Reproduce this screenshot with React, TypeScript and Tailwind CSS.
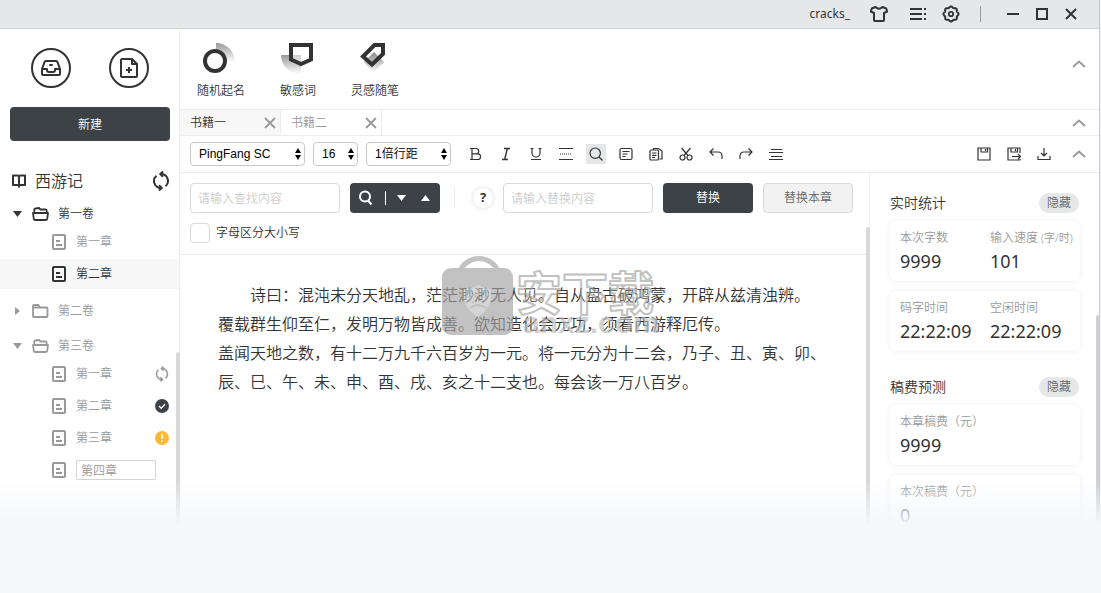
import React, { useState } from 'react';

type IconProps = { className?: string };

const strokeProps = { fill: 'none', stroke: 'currentColor' };

/* ---------- icons ---------- */

function InboxIcon() {
  return (
    <svg width="20" height="16" viewBox="0 0 20 16" {...strokeProps} strokeWidth="2" strokeLinejoin="round">
      <path d="M1 9 3.5 2.2Q3.9 1 5 1h10q1.100 0 1.500 1.200L19 9v5q0 1-1 1H2q-1 0-1-1z" />
      <path d="M1 9h5v1q0 2 2 2h4q2 0 2-2V9h5M8.300 5h3.400" />
    </svg>
  );
}

function FilePlusIcon() {
  return (
    <svg width="18" height="20" viewBox="0 0 18 20" {...strokeProps} strokeWidth="2" strokeLinejoin="round">
      <path d="M2 1h10l5 5v12q0 1-1 1H2q-1 0-1-1V2q0-1 1-1z" />
      <path d="M12 1v5h5M6 12h6M9 9v6" />
    </svg>
  );
}

function BookIcon() {
  return (
    <svg width="14" height="14" viewBox="0 0 14 14" {...strokeProps} strokeWidth="2" strokeLinejoin="round">
      <path d="M1 1.500h4.500Q7 1.500 7 3v8H1zM13 1.500H8.500Q7 1.500 7 3v8h6zM7 11v2.500" />
    </svg>
  );
}

function SyncIcon({ className }: IconProps) {
  return (
    <svg className={className} viewBox="0 0 18 20" {...strokeProps} strokeWidth="2">
      <path d="M8.500 3a7 7 0 0 1 5 12.300M9.500 17a7 7 0 0 1-5-12.300" />
      <path d="M11 .5 8.300 3 11 5.700M7 14.300 9.700 17 7 19.500" />
    </svg>
  );
}

function OpenFolderIcon() {
  return (
    <svg width="17" height="14" viewBox="0 0 17 14" {...strokeProps} strokeWidth="1.800" strokeLinejoin="round">
      <path d="M2.300 6V2.500Q2.300 1.500 3.500 1.500L7 1l1.500 1.500h5q1.200 0 1.200 1.200V6" />
      <path d="M1 6h15l-.8 6q-.1 1-1.200 1H3q-1 0-1.200-1z" />
    </svg>
  );
}

function FolderIcon() {
  return (
    <svg width="17" height="14" viewBox="0 0 17 14" {...strokeProps} strokeWidth="1.800" strokeLinejoin="round">
      <path d="M1 12V2q0-1 1-1h4.500L8 3.500h6.500q1 0 1 1V12q0 1-1 1H2q-1 0-1-1zM1 3.500h7" />
    </svg>
  );
}

function ChapterIcon() {
  return (
    <svg width="14" height="16" viewBox="0 0 14 16" {...strokeProps} strokeWidth="2">
      <rect x="1" y="1" width="12" height="14" rx="1" />
      <path d="M4 7h4M4 11h6" strokeWidth="2" />
    </svg>
  );
}

function DoneIcon() {
  return (
    <svg width="14" height="14" viewBox="0 0 14 14">
      <circle cx="7" cy="7" r="7" fill="#3d4246" />
      <path d="M4 7l2.200 2.200L10 5.200" fill="none" stroke="#fff" strokeWidth="1.300" />
    </svg>
  );
}

function WarnIcon() {
  return (
    <svg width="14" height="14" viewBox="0 0 14 14">
      <circle cx="7" cy="7" r="7" fill="#fdb933" />
      <path d="M7 3v5M7 9.500V11" stroke="#fff" strokeWidth="1.600" />
    </svg>
  );
}

function Caret({ dir, className }: { dir: 'up' | 'down' | 'right'; className?: string }) {
  const points = { up: '0,6 9,6 4.500,0', down: '0,0 9,0 4.500,6', right: '2,-1 2,7 7,3' }[dir];
  return (
    <svg width="9" height="6" viewBox="0 0 9 6" overflow="visible" className={className}>
      <polygon points={points} fill="currentColor" />
    </svg>
  );
}

function ChevronUp() {
  return (
    <svg width="14" height="8" viewBox="0 0 14 8" {...strokeProps} strokeWidth="1.800">
      <path d="M1 7l6-5.500L13 7" />
    </svg>
  );
}

function CloseIcon({ size, width }: { size: number; width: number }) {
  return (
    <svg width={size} height={size} viewBox="0 0 12 12" {...strokeProps} strokeWidth={width}>
      <path d="M1 1l10 10M11 1 1 11" />
    </svg>
  );
}

function ShirtIcon() {
  return (
    <svg width="18" height="16" viewBox="0 0 18 16" {...strokeProps} strokeWidth="2" strokeLinejoin="round">
      <path d="M5.500 1Q9 4.500 12.500 1l3.700 1.500 1 3L14 7v7q0 1-1 1H5q-1 0-1-1V7L.8 5.500l1-3z" />
    </svg>
  );
}

function MenuDotsIcon() {
  return (
    <svg width="20" height="14" viewBox="0 0 20 14" {...strokeProps} strokeWidth="2">
      <path d="M2 2h12M2 7h12M2 12h12M16 2h2M16 7h2M16 12h2" />
    </svg>
  );
}

function GearIcon() {
  // eight soft lobes around the hub
  const pts = Array.from({ length: 96 }, (_, i) => {
    const a = (i / 96) * Math.PI * 2;
    const r = 7 + 0.6 * Math.cos(a * 8);
    return `${(9 + r * Math.sin(a)).toFixed(2)},${(9 - r * Math.cos(a)).toFixed(2)}`;
  });
  return (
    <svg width="18" height="18" viewBox="0 0 18 18" {...strokeProps} strokeWidth="2">
      <polygon points={pts.join(' ')} />
      <circle cx="9" cy="9" r="2.200" strokeWidth="1.800" />
    </svg>
  );
}

function RandomNameIcon() {
  return (
    <svg width="38" height="32" viewBox="0 0 38 32" className="-mx-px">
      <defs>
        <linearGradient id="gName" x1="0" y1="0" x2="0" y2="1">
          <stop offset="0" stopColor="#999" />
          <stop offset="1" stopColor="#fff" />
        </linearGradient>
      </defs>
      <path d="M14 1a19 19 0 0 1 19 19H14z" fill="url(#gName)" />
      <circle cx="13" cy="19" r="10" fill="#fff" stroke="#333" strokeWidth="4" />
    </svg>
  );
}

function SensitiveIcon() {
  return (
    <svg width="38" height="32" viewBox="0 0 38 32" className="-mx-px">
      <defs>
        <linearGradient id="gWord" x1="0" y1="0" x2="0" y2="1">
          <stop offset="0" stopColor="#999" />
          <stop offset="1" stopColor="#fff" />
        </linearGradient>
      </defs>
      <path d="M2 13h20v19A19 19 0 0 1 2 13z" fill="url(#gWord)" />
      <path d="M12 3h20v14.500L22 22l-10-4.500z" fill="#fff" fillOpacity=".55" stroke="#333" strokeWidth="4" />
    </svg>
  );
}

function EssayIcon() {
  return (
    <svg width="38" height="32" viewBox="0 0 38 32" className="-mx-px">
      <defs>
        <linearGradient id="gPen" x1="0" y1="0" x2="0" y2="1">
          <stop offset="0" stopColor="#888" />
          <stop offset="1" stopColor="#fff" />
        </linearGradient>
      </defs>
      <path d="M18 10 28 20 17 31 8 20z" fill="url(#gPen)" />
      <path d="M18.500 3H27v9L16 22.500 7 14.500z" fill="none" stroke="#333" strokeWidth="4" />
    </svg>
  );
}

const toolIcons: { label: string; art: React.ReactNode }[] = [
  { label: '加粗', art: <path d="M3 1.500v11M1 1.500h6.500a2.700 2.700 0 0 1 0 5.300H3M7.500 6.800h1.200a2.800 2.800 0 0 1 0 5.700H1" /> },
  { label: '斜体', art: <path d="M5 1.500h6M3 12.500h6M8.300 1.500l-2.600 11" strokeWidth="1.400" /> },
  { label: '下划线', art: <path d="M1.500 1.500h3M9.500 1.500h3M3 1.500V6a4 4 0 0 0 8 0V1.500M2 12.500h10" /> },
  { label: '分隔线', art: <><path d="M0 1.500h14M0 12.500h14" /><path d="M1 7h12" strokeDasharray="1 1" /></> },
  { label: '查找', art: <><circle cx="6.200" cy="6.200" r="5.200" /><path d="M10 10l3.500 3.500" /></> },
  { label: '排版', art: <><rect x="1" y="1.500" width="12" height="11" rx="1.500" /><path d="M3.500 4.500h7M3.500 7h5M3.500 9.500h3" /></> },
  { label: '复制', art: <><path d="M4.500 3V1.500h5L13 4v8h-2.500" /><rect x="1" y="3" width="8.500" height="10" rx="1" /><path d="M3 6h4.500M3 8.300h4.500M3 10.500h3" /></> },
  { label: '剪切', art: <><circle cx="3.500" cy="10.500" r="2.500" /><circle cx="10.500" cy="10.500" r="2.500" /><path d="M2.500 1l6.500 7.500M11.500 1 5 8.500" /></> },
  { label: '撤销', art: <path d="M4.500 1.500 1 5l3.500 3.500M1 5h8q4 0 4 4v3" /> },
  { label: '重做', art: <path d="M9.500 1.500 13 5 9.500 8.500M13 5H5Q1 5 1 9v3" /> },
  { label: '行列', art: <path d="M2 2.500h11M0 5.500h14M2 9.500h11M0 12.500h14" /> },
];

const fileIcons: { label: string; art: React.ReactNode }[] = [
  { label: '保存', art: <path d="M1 1h12v12H1zM4 1v4h6.500V1M8.500 2v2" /> },
  { label: '另存为', art: <path d="M13 6V1H1v12h12v-1M4 1v4h6.500V1M8.500 2v2M5 9.500h8.500M11 7l2.500 2.500L11 12" /> },
  { label: '导出', art: <path d="M1 9v3.500h12V9M7 1v8M4 6l3 3 3-3" /> },
];

function Glyph({ children }: { children: React.ReactNode }) {
  return (
    <svg width="14" height="14" viewBox="0 0 14 14" {...strokeProps} strokeWidth="1.200">
      {children}
    </svg>
  );
}

function Watermark() {
  return (
    <svg
      aria-hidden="true"
      width="220"
      height="84"
      viewBox="0 0 220 84"
      className="pointer-events-none absolute left-[261px] top-0"
    >
      <g opacity=".65">
        <path d="M19 16a20 18 0 0 1 38 0" fill="none" stroke="#a2a2a2" strokeWidth="5" />
        <rect x="1" y="13" width="71" height="67" rx="9" fill="#a2a2a2" />
        <path d="M37 30q7 4 13 4 2 18-13 28Q20 52 23 34q8 0 14-4z" fill="#bfbfbf" />
        <path d="M31 38l12 10M43 38 31 48M29 53q8-6 16 0" stroke="#a2a2a2" strokeWidth="2" fill="none" />
        <text x="82" y="78" className="font-['Liberation_Sans',sans-serif] text-[30px] font-bold" fill="#bbb">
          anxz.com
        </text>
        <text
          x="75"
          y="55"
          className="font-['Noto_Sans_CJK_SC',sans-serif] text-[46px] font-bold"
          fill="#fff"
          fillOpacity=".4"
          stroke="#a2a2a2"
          strokeWidth="2"
          strokeLinejoin="round"
        >
          安下载
        </text>
      </g>
    </svg>
  );
}

/* ---------- title bar ---------- */

function TitleBar() {
  return (
    <header className="flex h-[29px] shrink-0 items-center justify-end border-b border-[#d3d3d3] bg-[#e6e7e9] pr-[21px] text-[#333]">
      <span className="mr-5 text-xs font-normal">cracks_</span>
      <button aria-label="皮肤" className="mr-5"><ShirtIcon /></button>
      <button aria-label="菜单" className="mr-[14px]"><MenuDotsIcon /></button>
      <button aria-label="设置" className="mr-5"><GearIcon /></button>
      <span className="mr-[25px] h-4 w-px bg-[#999]" />
      <div className="flex items-center gap-[15px]">
        <button aria-label="最小化" className="flex size-[14px] items-center justify-center"><span className="h-0.5 w-3 bg-[#333]" /></button>
        <button aria-label="最大化" className="flex size-[14px] items-center justify-center"><span className="size-3 border-2 border-[#333]" /></button>
        <button aria-label="关闭" className="flex size-[14px] items-center justify-center"><CloseIcon size={12} width={2} /></button>
      </div>
    </header>
  );
}

/* ---------- sidebar ---------- */

type Chapter = { name: string; active?: boolean; editing?: boolean; status?: 'sync' | 'done' | 'warn' };
type Volume = { name: string; open: boolean; current?: boolean; chapters: Chapter[] };

const volumes: Volume[] = [
  { name: '第一卷', open: true, current: true, chapters: [{ name: '第一章' }, { name: '第二章', active: true }] },
  { name: '第二卷', open: false, chapters: [] },
  {
    name: '第三卷',
    open: true,
    chapters: [
      { name: '第一章', status: 'sync' },
      { name: '第二章', status: 'done' },
      { name: '第三章', status: 'warn' },
      { name: '第四章', editing: true },
    ],
  },
];

function ChapterRow({ chapter }: { chapter: Chapter }) {
  const tone = chapter.active ? 'bg-[#f7f7f7] text-[#333]' : 'text-[#999]';
  if (chapter.editing) {
    return (
      <li className={`flex h-[30px] items-center gap-2.5 pl-[52px] ${tone}`}>
        <ChapterIcon />
        <input aria-label="章节名" defaultValue={chapter.name} className="h-5 w-20 rounded-xs border border-[#d3d3d3] bg-white px-1 outline-none" />
      </li>
    );
  }
  return (
    <li className={`flex h-[30px] items-center pl-[52px] pr-2.5 ${tone}`}>
      <button className="flex flex-1 items-center gap-2.5">
        <ChapterIcon />
        {chapter.name}
      </button>
      {chapter.status === 'sync' && <SyncIcon className="h-4 w-[14px]" />}
      {chapter.status === 'done' && <DoneIcon />}
      {chapter.status === 'warn' && <WarnIcon />}
    </li>
  );
}

function Sidebar() {
  return (
    <aside className="relative w-[180px] shrink-0 border-r border-[#ececec] text-xs">
      <div className="flex justify-between pl-[31px] pr-[30px] pt-[19px]">
        <button aria-label="书库" className="flex size-10 items-center justify-center rounded-full border-2 border-[#333] text-[#333]"><InboxIcon /></button>
        <button aria-label="新建文件" className="flex size-10 items-center justify-center rounded-full border-2 border-[#333] text-[#333]"><FilePlusIcon /></button>
      </div>
      <div className="pl-2.5 pr-[9px] pt-[19px]">
        <button className="h-[34px] w-full rounded bg-[#3d4246] pt-0.5 text-white">新建</button>
      </div>
      <div className="mt-[30px] flex h-5 items-center pl-3 pr-[9px] text-[#333]">
        <BookIcon />
        <h1 className="ml-[9px] flex-1 text-base font-[350]">西游记</h1>
        <button aria-label="同步"><SyncIcon className="h-5 w-[18px]" /></button>
      </div>
      <ul className="mt-2.5 flex flex-col gap-[9px]">
        {volumes.map(v => (
          <li key={v.name}>
            <button className={`flex h-[26px] w-full items-center pl-[13px] ${v.current ? 'text-[#333]' : 'text-[#999]'}`}>
              <Caret dir={v.open ? 'down' : 'right'} />
              <span className="ml-2.5 mr-[9px]">{v.open ? <OpenFolderIcon /> : <FolderIcon />}</span>
              {v.name}
            </button>
            {v.open && (
              <ul className="flex flex-col gap-0.5">
                {v.chapters.map(c => <ChapterRow key={c.name} chapter={c} />)}
              </ul>
            )}
          </li>
        ))}
      </ul>
      <div className="absolute -right-px bottom-0 top-[323px] w-1 rounded-t bg-[#d9d9d9]" />
    </aside>
  );
}

/* ---------- top ribbons ---------- */

function CollapseButton() {
  return (
    <button aria-label="收起" className="ml-auto text-[#999]">
      <ChevronUp />
    </button>
  );
}

function Ribbon() {
  const items = [
    { label: '随机起名', icon: <RandomNameIcon /> },
    { label: '敏感词', icon: <SensitiveIcon /> },
    { label: '灵感随笔', icon: <EssayIcon /> },
  ];
  return (
    <div className="flex h-[81px] shrink-0 items-center border-b border-[#ececec] pl-[17px] pr-[13px] text-xs text-[#333]">
      <div className="flex gap-[35px]">
        {items.map(it => (
          <button key={it.label} className="flex flex-col items-center gap-[7px] pt-[5px] leading-5">
            {it.icon}
            {it.label}
          </button>
        ))}
      </div>
      <div className="-mt-2.5 ml-auto flex"><CollapseButton /></div>
    </div>
  );
}

function BookTabs() {
  const [active, setActive] = useState('书籍一');
  return (
    <div className="flex h-[26px] shrink-0 items-center border-b border-[#ececec] pr-[13px] text-xs">
      {['书籍一', '书籍二'].map(name => (
        <div
          key={name}
          className={`flex h-full w-[101px] items-center justify-between border-r border-[#ececec] pl-2.5 pr-1 ${name === active ? 'bg-[#f7f7f7] text-[#333]' : 'text-[#999]'}`}
        >
          <button onClick={() => setActive(name)}>{name}</button>
          <button aria-label={`关闭${name}`} className="text-[#999]"><CloseIcon size={12} width={1.8} /></button>
        </div>
      ))}
      <CollapseButton />
    </div>
  );
}

function PickerSelect({ label, value, className }: { label: string; value: string; className: string }) {
  return (
    <div className={`relative h-6 shrink-0 ${className}`}>
      <select
        aria-label={label}
        defaultValue={value}
        className="block h-6 w-full appearance-none rounded border border-[#c8c8cc] bg-white pl-2 pr-3 font-['Liberation_Sans','Noto_Sans_CJK_SC',sans-serif] text-xs text-black outline-none"
      >
        <option>{value}</option>
      </select>
      <svg width="6" height="12" viewBox="0 0 6 12" className="pointer-events-none absolute right-1 top-1.5">
        <path d="M0 5 3 0l3 5zM0 7l3 5 3-5z" fill="#000" />
      </svg>
    </div>
  );
}

function FormatBar() {
  return (
    <div className="flex h-[37px] shrink-0 items-center border-b border-[#ececec] pl-2.5 pr-[13px] text-[#333]">
      <div className="flex gap-2">
        <PickerSelect label="字体" value="PingFang SC" className="w-[115px]" />
        <PickerSelect label="字号" value="16" className="w-[45px]" />
        <PickerSelect label="行距" value="1倍行距" className="w-[85px]" />
      </div>
      <div className="ml-[15px] flex gap-2.5">
        {toolIcons.map(t => (
          <button
            key={t.label}
            aria-label={t.label}
            className={`flex size-5 items-center justify-center ${t.label === '查找' ? 'bg-[#e6e7e9]' : ''}`}
          >
            <Glyph>{t.art}</Glyph>
          </button>
        ))}
      </div>
      <div className="ml-auto mr-[18px] flex gap-2.5">
        {fileIcons.map(t => (
          <button key={t.label} aria-label={t.label} className="flex size-5 items-center justify-center"><Glyph>{t.art}</Glyph></button>
        ))}
      </div>
      <button aria-label="收起" className="text-[#999]"><ChevronUp /></button>
    </div>
  );
}

/* ---------- editor ---------- */

function FindReplace() {
  const field = 'h-[30px] w-[150px] rounded border border-[#d9d9d9] bg-white px-[7px] outline-none placeholder:text-[#ccc]';
  return (
    <div className="border-b border-[#ececec] pb-[11px] pl-2.5 pt-2.5 text-xs text-[#333]">
      <div className="flex items-center">
        <input aria-label="查找内容" placeholder="请输入查找内容" className={field} />
        <div className="ml-2.5 flex h-[30px] w-[90px] items-center rounded bg-[#3d4246] pl-[9px] text-white">
          <button aria-label="查找">
            <svg width="14" height="16" viewBox="0 0 14 16" {...strokeProps} strokeWidth="2">
              <circle cx="6" cy="6.500" r="5" />
              <path d="M9 10.500l3.500 4" />
            </svg>
          </button>
          <span className="ml-3 h-[14px] w-px bg-white" />
          <button aria-label="下一个" className="ml-[11px]"><Caret dir="down" /></button>
          <button aria-label="上一个" className="ml-[15px]"><Caret dir="up" /></button>
        </div>
        <span className="ml-[14px] h-5 w-px bg-[#ececec]" />
        <button className="ml-[18px] size-5 rounded-full bg-white text-[13px] font-bold shadow-[0_0_5px_rgba(0,0,0,0.15)]">?</button>
        <input aria-label="替换内容" placeholder="请输入替换内容" className={`ml-2.5 ${field}`} />
        <button className="ml-2.5 h-[30px] w-[90px] rounded bg-[#3d4246] text-white">替换</button>
        <button className="ml-2.5 h-[30px] w-[90px] rounded border border-[#d9d9d9] bg-[#f2f2f2] text-[#666]">替换本章</button>
      </div>
      <label className="mt-2.5 flex w-fit items-center gap-1.5">
        <input type="checkbox" className="size-5 appearance-none rounded border border-[#d9d9d9] bg-white checked:bg-[#3d4246]" />
        字母区分大小写
      </label>
    </div>
  );
}

function Editor() {
  return (
    <main className="relative min-w-0 flex-1 border-r border-[#ececec]">
      <FindReplace />
      <div className="relative">
        <article className="px-[38px] pt-[26px] text-base leading-[29px] text-[#333]">
          <p className="indent-8">诗曰：混沌未分天地乱，茫茫渺渺无人见。自从盘古破鸿蒙，开辟从兹清浊辨。</p>
          <p>覆载群生仰至仁，发明万物皆成善。欲知造化会元功，须看西游释厄传。</p>
          <p>盖闻天地之数，有十二万九千六百岁为一元。将一元分为十二会，乃子、丑、寅、卯、辰、巳、午、未、申、酉、戌、亥之十二支也。每会该一万八百岁。</p>
        </article>
        <Watermark />
      </div>
      <div className="absolute -right-px bottom-0 top-[54px] w-1 rounded-t bg-[#d9d9d9]" />
    </main>
  );
}

/* ---------- statistics ---------- */

type Stat = { label: string; unit?: string; value: string };

function StatCard({ stats }: { stats: Stat[] }) {
  return (
    <dl className="grid h-[60px] grid-cols-2 rounded-md bg-white pl-2.5 pt-2 shadow-[0_0_6px_rgba(0,0,0,0.07)]">
      {stats.map(s => (
        <div key={s.label} className="whitespace-nowrap">
          <dt className="text-xs leading-[18px] text-[#999]">
            {s.label}
            {s.unit && <span className="text-[11px]"> {s.unit}</span>}
          </dt>
          <dd className="text-lg font-normal leading-7 text-[#333]">{s.value}</dd>
        </div>
      ))}
    </dl>
  );
}

function StatSection({ title, cards }: { title: string; cards: Stat[][] }) {
  return (
    <section>
      <div className="mb-2 flex h-5 items-center justify-between">
        <h2 className="text-sm font-[350] text-[#333]">{title}</h2>
        <button className="mr-px h-5 w-10 rounded-full bg-[#e6e7e9] text-xs text-[#666]">隐藏</button>
      </div>
      <div className="flex flex-col gap-2.5">
        {cards.map(c => <StatCard key={c[0].label} stats={c} />)}
      </div>
    </section>
  );
}

function StatsPanel() {
  return (
    <aside className="relative flex w-[229px] shrink-0 flex-col gap-[26px] pl-5 pr-[19px] pt-5">
      <StatSection
        title="实时统计"
        cards={[
          [{ label: '本次字数', value: '9999' }, { label: '输入速度', unit: '(字/时)', value: '101' }],
          [{ label: '码字时间', value: '22:22:09' }, { label: '空闲时间', value: '22:22:09' }],
        ]}
      />
      <StatSection
        title="稿费预测"
        cards={[[{ label: '本章稿费（元）', value: '9999' }], [{ label: '本次稿费（元）', value: '0' }]]}
      />
      <div className="absolute bottom-0 right-0 top-[142px] w-[3px] rounded-t bg-[#d0d0d0]" />
    </aside>
  );
}

export default function App() {
  return (
    <div className="relative h-screen overflow-hidden bg-[#f5f7fb] pr-px font-['Noto_Sans','Noto_Sans_CJK_SC',sans-serif] font-[350]">
      <div className="flex h-full flex-col border-r border-[#c8c8cc] bg-white">
        <TitleBar />
        <div className="flex min-h-0 flex-1">
          <Sidebar />
          <div className="flex min-w-0 flex-1 flex-col">
            <Ribbon />
            <BookTabs />
            <FormatBar />
            <div className="flex min-h-0 flex-1">
              <Editor />
              <StatsPanel />
            </div>
          </div>
        </div>
      </div>
      <div className="pointer-events-none absolute inset-x-0 bottom-0 h-[113px] bg-linear-to-b from-[#f5f7fb]/0 from-0% to-[#f5f7fb] to-40%" />
    </div>
  );
}
